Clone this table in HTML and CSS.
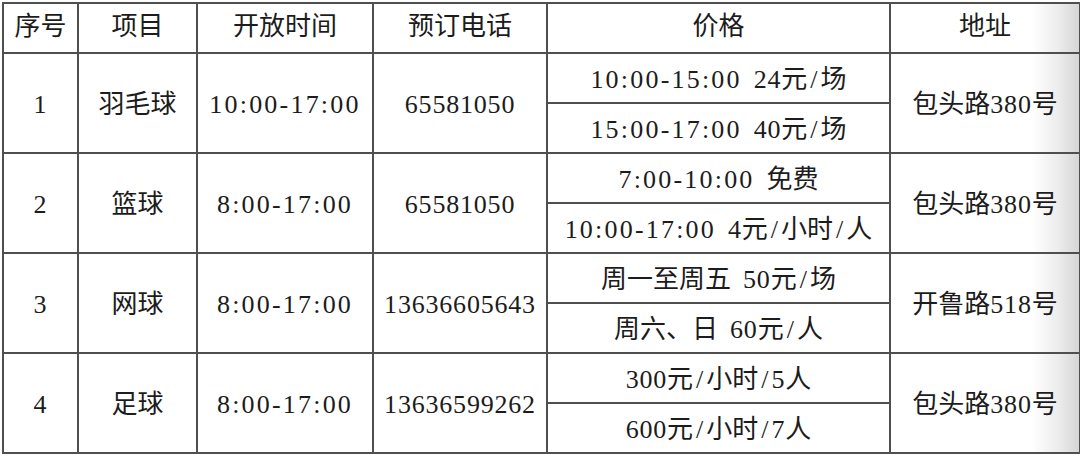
FILE: index.html
```html
<!DOCTYPE html>
<html lang="zh">
<head>
<meta charset="utf-8">
<link rel="stylesheet" href="styles.css">
</head>
<body>
<table class="sched">
  <colgroup>
    <col class="c1"><col class="c2"><col class="c3"><col class="c4"><col class="c5"><col class="c6">
  </colgroup>
  <thead>
    <tr><th>序号</th><th>项目</th><th>开放时间</th><th>预订电话</th><th>价格</th><th>地址</th></tr>
  </thead>
  <tbody>
    <tr>
      <td rowspan="2"><span class="n">1</span></td>
      <td rowspan="2">羽毛球</td>
      <td rowspan="2"><span class="t">10:00-17:00</span></td>
      <td rowspan="2"><span class="n">65581050</span></td>
      <td><span class="t">10:00-15:00</span><span class="gap"></span><span class="n">24</span>元<span class="s">/</span>场</td>
      <td rowspan="2">包头路<span class="n">380</span>号</td>
    </tr>
    <tr>
      <td><span class="t">15:00-17:00</span><span class="gap"></span><span class="n">40</span>元<span class="s">/</span>场</td>
    </tr>
    <tr>
      <td rowspan="2"><span class="n">2</span></td>
      <td rowspan="2">篮球</td>
      <td rowspan="2"><span class="t">8:00-17:00</span></td>
      <td rowspan="2"><span class="n">65581050</span></td>
      <td><span class="t">7:00-10:00</span><span class="gap"></span>免费</td>
      <td rowspan="2">包头路<span class="n">380</span>号</td>
    </tr>
    <tr>
      <td><span class="t">10:00-17:00</span><span class="gap"></span><span class="n">4</span>元<span class="s">/</span>小时<span class="s">/</span>人</td>
    </tr>
    <tr>
      <td rowspan="2"><span class="n">3</span></td>
      <td rowspan="2">网球</td>
      <td rowspan="2"><span class="t">8:00-17:00</span></td>
      <td rowspan="2"><span class="n">13636605643</span></td>
      <td>周一至周五<span class="gap"></span><span class="n">50</span>元<span class="s">/</span>场</td>
      <td rowspan="2">开鲁路<span class="n">518</span>号</td>
    </tr>
    <tr>
      <td>周六、日<span class="gap"></span><span class="n">60</span>元<span class="s">/</span>人</td>
    </tr>
    <tr>
      <td rowspan="2"><span class="n">4</span></td>
      <td rowspan="2">足球</td>
      <td rowspan="2"><span class="t">8:00-17:00</span></td>
      <td rowspan="2"><span class="n">13636599262</span></td>
      <td><span class="n">300</span>元<span class="s">/</span>小时<span class="s">/</span><span class="n">5</span>人</td>
      <td rowspan="2">包头路<span class="n">380</span>号</td>
    </tr>
    <tr>
      <td><span class="n">600</span>元<span class="s">/</span>小时<span class="s">/</span><span class="n">7</span>人</td>
    </tr>
  </tbody>
</table>
</body>
</html>
```

FILE: styles.css
```css
html, body {
  margin: 0;
  padding: 0;
  background: #ffffff;
}

body {
  padding: 2px 0 0 2px;
  font-family: "Liberation Serif", "Noto Sans CJK SC", serif;
  color: #1c1c1c;
}

.sched {
  border-collapse: collapse;
  table-layout: fixed;
  width: 1077px;
  background: linear-gradient(to right, #ffffff 0%, #ffffff 95.5%, #ececec 98%, #d4d4d4 100%);
}

.c1 { width: 75px; }
.c2 { width: 119px; }
.c3 { width: 176px; }
.c4 { width: 174px; }
.c5 { width: 343px; }
.c6 { width: 190px; }

.sched th,
.sched td {
  border: 2px solid #4f4f4f;
  padding: 0;
  text-align: center;
  vertical-align: middle;
  font-size: 26px;
  font-weight: normal;
  line-height: 30px;
  white-space: nowrap;
}

.sched th {
  height: 46px;
  padding-bottom: 2px;
}

.sched td {
  height: 44px;
  padding-top: 4px;
}

.t {
  letter-spacing: 2.2px;
}

.n {
  letter-spacing: 0.8px;
}

.s {
  padding: 0 3px;
}

.gap {
  display: inline-block;
  width: 12px;
}
```
